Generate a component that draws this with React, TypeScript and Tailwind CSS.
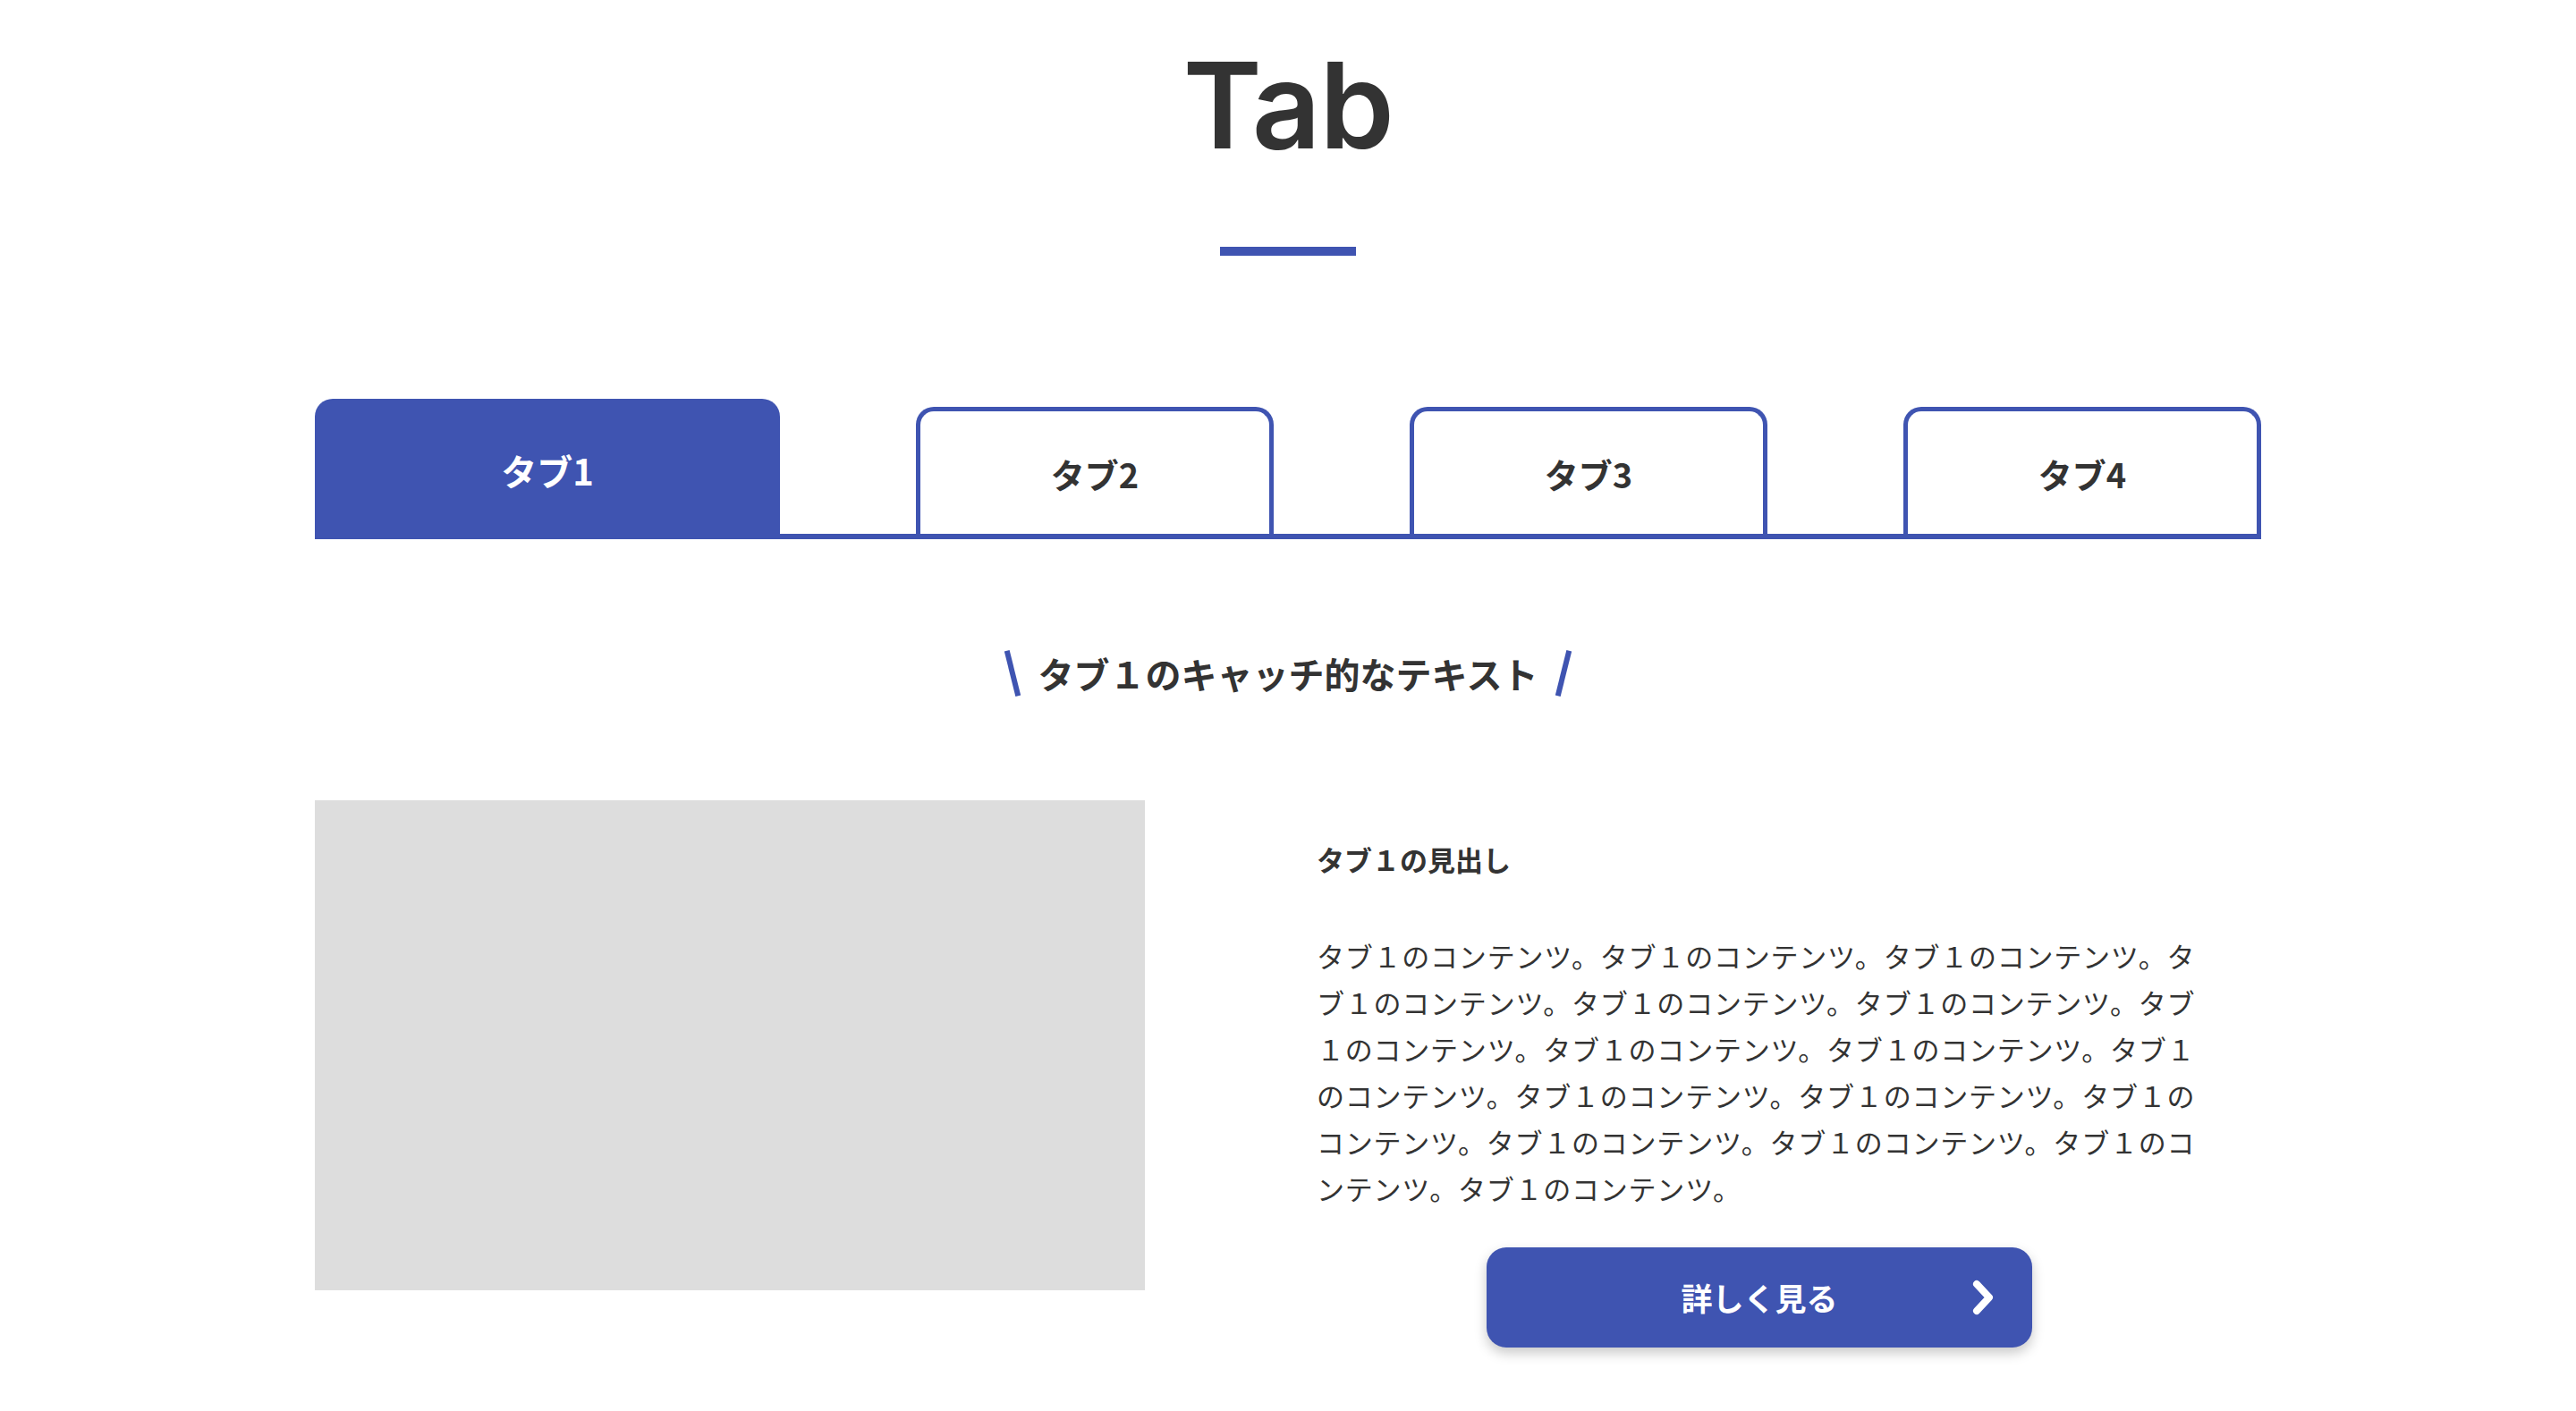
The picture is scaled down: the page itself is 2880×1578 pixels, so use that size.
const tabs = ['タブ1', 'タブ2', 'タブ3', 'タブ4'];

const body = 'タブ１のコンテンツ。'.repeat(17);

export default function App() {
  const active = 0;

  return (
    <div
      className="min-h-[1578px] bg-white text-[#333333]"
      style={{ fontFamily: '"Noto Sans CJK JP", "Noto Sans", sans-serif' }}
    >
      {/* Title */}
      <div className="flex flex-col items-center pt-[50px]">
        <h1
          className="text-[134px] leading-none font-semibold tracking-[-0.01em]"
          style={{ fontFamily: 'Inter, "Liberation Sans", Arial, sans-serif' }}
        >
          Tab
        </h1>
        <div className="mt-[92px] h-[10px] w-[152px] bg-[#3f54b1]" />
      </div>

      <div className="mx-auto w-[2176px]">
        {/* Tabs */}
        <div className="mt-[160px] flex items-end justify-between border-b-[6px] border-[#3f54b1]">
          {tabs.map((tab, i) =>
            i === active ? (
              <button
                key={tab}
                className="flex h-[151px] w-[520px] items-center justify-center rounded-t-[20px] bg-[#3f54b1] text-[40px] font-bold text-white"
              >
                <span className="mt-[8px]">{tab}</span>
              </button>
            ) : (
              <button
                key={tab}
                className="flex h-[142px] w-[400px] items-center justify-center rounded-t-[20px] border-[5px] border-b-0 border-[#3f54b1] bg-white text-[38px] font-bold text-[#333333]"
              >
                <span className="mt-[2px]">{tab}</span>
              </button>
            )
          )}
        </div>

        {/* Catch */}
        <div className="mt-[120px] flex items-center justify-center gap-[26px]">
          <span className="block h-[52px] w-[6px] -rotate-[14deg] bg-[#3f54b1]" />
          <p className="text-[40px] leading-[60px] font-bold">タブ１のキャッチ的なテキスト</p>
          <span className="block h-[52px] w-[6px] rotate-[14deg] bg-[#3f54b1]" />
        </div>

        {/* Content */}
        <div className="mt-[112px] flex gap-[192px]">
          <div className="h-[548px] w-[928px] bg-[#dddddd]" />
          <div className="w-[990px] pt-[43px]">
            <h3 className="text-[31px] leading-[45px] font-bold">タブ１の見出し</h3>
            <p className="mt-[60px] text-[31px] leading-[52px] tracking-[0.025em]">{body}</p>
            <button className="relative mx-auto mt-[40px] flex h-[112px] w-[610px] items-center justify-center rounded-[22px] bg-[#3f54b1] text-[35px] font-bold text-white shadow-[0_6px_14px_rgba(0,0,0,0.22)]">
              詳しく見る
              <svg
                className="absolute right-[43px] top-1/2 h-[40px] w-[24px] -translate-y-1/2"
                viewBox="0 0 24 40"
                fill="none"
                stroke="white"
                strokeWidth="8"
                strokeLinecap="round"
                strokeLinejoin="round"
              >
                <polyline points="5,5 19,20 5,35" />
              </svg>
            </button>
          </div>
        </div>
      </div>
    </div>
  );
}
